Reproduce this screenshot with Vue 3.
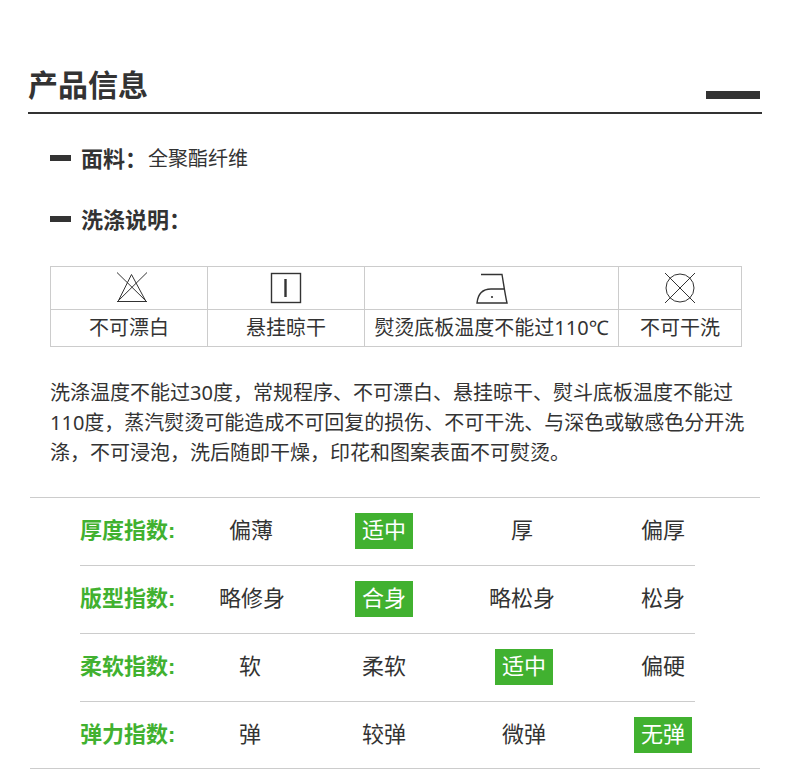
<script setup>
const cares = [
  { name: '不可漂白', icon: 'bleach' },
  { name: '悬挂晾干', icon: 'hang' },
  { name: '熨烫底板温度不能过110℃', icon: 'iron' },
  { name: '不可干洗', icon: 'dry' }
]
const ratings = [
  { label: '厚度指数:', items: ['偏薄', '适中', '厚', '偏厚'], on: 1, cols: '107px 128px 138px 138px 144px' },
  { label: '版型指数:', items: ['略修身', '合身', '略松身', '松身'], on: 1, cols: '107px 130px 134px 142px 140px' },
  { label: '柔软指数:', items: ['软', '柔软', '适中', '偏硬'], on: 2, cols: '107px 126px 142px 138px 140px' },
  { label: '弹力指数:', items: ['弹', '较弹', '微弹', '无弹'], on: 3, cols: '107px 126px 142px 138px 140px' }
]
</script>

<template>
  <div class="page">
    <header class="head">
      <h1>产品信息</h1>
      <span class="head-bar"></span>
    </header>

    <div class="spec spec-first">
      <span class="dash"></span>
      <b>面料：</b>
      <span class="spec-value">全聚酯纤维</span>
    </div>
    <div class="spec spec-second">
      <span class="dash"></span>
      <b>洗涤说明：</b>
    </div>

    <table class="care">
      <colgroup>
        <col class="c1" /><col class="c2" /><col class="c3" /><col class="c4" />
      </colgroup>
      <tbody>
        <tr class="icons">
          <td v-for="c in cares" :key="c.icon">
            <svg :class="c.icon" width="32" height="32" viewBox="0 0 32 32" fill="none" stroke="#333" stroke-width="1">
              <template v-if="c.icon === 'bleach'">
                <path d="M15.5 2.5 L2 29.5 H30 Z" />
                <path d="M1 0.5 L31 30 M31 0.5 L1 30" />
              </template>
              <template v-else-if="c.icon === 'hang'">
                <rect x="1.5" y="1.5" width="29" height="29" stroke-width="1.4" />
                <path d="M15.5 7 V25" stroke-width="2.4" />
              </template>
              <template v-else-if="c.icon === 'iron'">
                <path d="M5 2.5 H26 C27.5 11 29 22 31 31 H1 C2 21 8 17 15 17 H28" stroke-width="1.4" />
                <circle cx="16" cy="25" r="1.1" fill="#333" stroke="none" />
              </template>
              <template v-else>
                <circle cx="16" cy="16" r="14" />
                <path d="M1 1 L31 31 M31 1 L1 31" />
              </template>
            </svg>
          </td>
        </tr>
        <tr class="names">
          <td v-for="c in cares" :key="c.name">{{ c.name }}</td>
        </tr>
      </tbody>
    </table>

    <p class="desc">洗涤温度不能过30度，常规程序、不可漂白、悬挂晾干、熨斗底板温度不能过110度，蒸汽熨烫可能造成不可回复的损伤、不可干洗、与深色或敏感色分开洗涤，不可浸泡，洗后随即干燥，印花和图案表面不可熨烫。</p>

    <section class="ratings">
      <div v-for="r in ratings" :key="r.label" class="rating" :style="{ gridTemplateColumns: r.cols }">
        <b class="rating-label">{{ r.label }}</b>
        <div v-for="(t, i) in r.items" :key="t" class="rating-cell">
          <span :class="['rating-item', { on: i === r.on }]">{{ t }}</span>
        </div>
      </div>
    </section>
  </div>
</template>

<style>
html, body { margin: 0; background: #fff; }
</style>

<style scoped>
.page {
  width: 790px;
  height: 769px;
  overflow: hidden;
  box-sizing: border-box;
  padding-top: 62px;
  color: #333;
  font-family: "Noto Sans", "Noto Sans CJK SC", sans-serif;
  font-size: 20px;
}
.head {
  margin: 0 28px;
  height: 50px;
  border-bottom: 2px solid #333;
  display: flex;
  justify-content: space-between;
  align-items: flex-end;
}
.head h1 {
  margin: 0 0 5px;
  font-size: 30px;
  line-height: 44px;
  font-weight: 700;
}
.head-bar {
  width: 54px;
  height: 8px;
  margin: 0 2px 13px 0;
  background: #333;
}
.spec {
  display: flex;
  align-items: center;
  margin-left: 50px;
  height: 30px;
  line-height: 30px;
}
.spec-first { margin-top: 29px; }
.spec-second { margin-top: 31px; }
.dash {
  width: 21px;
  height: 6px;
  margin-right: 10px;
  background: #333;
}
.spec b { font-size: 22px; font-weight: 700; }
.spec-value { font-size: 20px; margin: 2px 0 0 1px; }
.care {
  margin: 32px 0 0 50px;
  width: 691px;
  table-layout: fixed;
  border-collapse: collapse;
}
.c1, .c2 { width: 157px; }
.c3 { width: 254px; }
.c4 { width: 123px; }
.care td {
  border: 1px solid #ccc;
  padding: 0;
  text-align: center;
  vertical-align: middle;
}
.icons td { height: 42px; }
.icons svg { display: block; margin: 0 auto; }
.icons svg.bleach { transform: translateX(3px); }
.names td { height: 36px; font-size: 20px; line-height: 36px; }
.desc {
  margin: 31px 0 0 50px;
  width: 700px;
  font-size: 20px;
  line-height: 30px;
}
.ratings {
  margin: 29px 30px 0;
  border-top: 1px solid #ccc;
  border-bottom: 1px solid #ccc;
  font-family: "Liberation Sans", "Noto Sans CJK SC", sans-serif;
}
.rating {
  display: grid;
  align-items: center;
  height: 66px;
  padding-bottom: 1px;
  margin: 0 65px 0 50px;
  border-top: 1px solid #ccc;
}
.rating:first-child { border-top: 0; }
.rating:last-child { padding-bottom: 0; }
.rating-label {
  color: #41b130;
  font-size: 22px;
  line-height: 36px;
  font-weight: 700;
  white-space: nowrap;
}
.rating-cell { display: flex; justify-content: center; }
.rating-item {
  display: block;
  font-size: 22px;
  line-height: 36px;
  padding: 0 7px;
  white-space: nowrap;
}
.rating-item.on {
  color: #fff;
  background: #41b130;
}
</style>
